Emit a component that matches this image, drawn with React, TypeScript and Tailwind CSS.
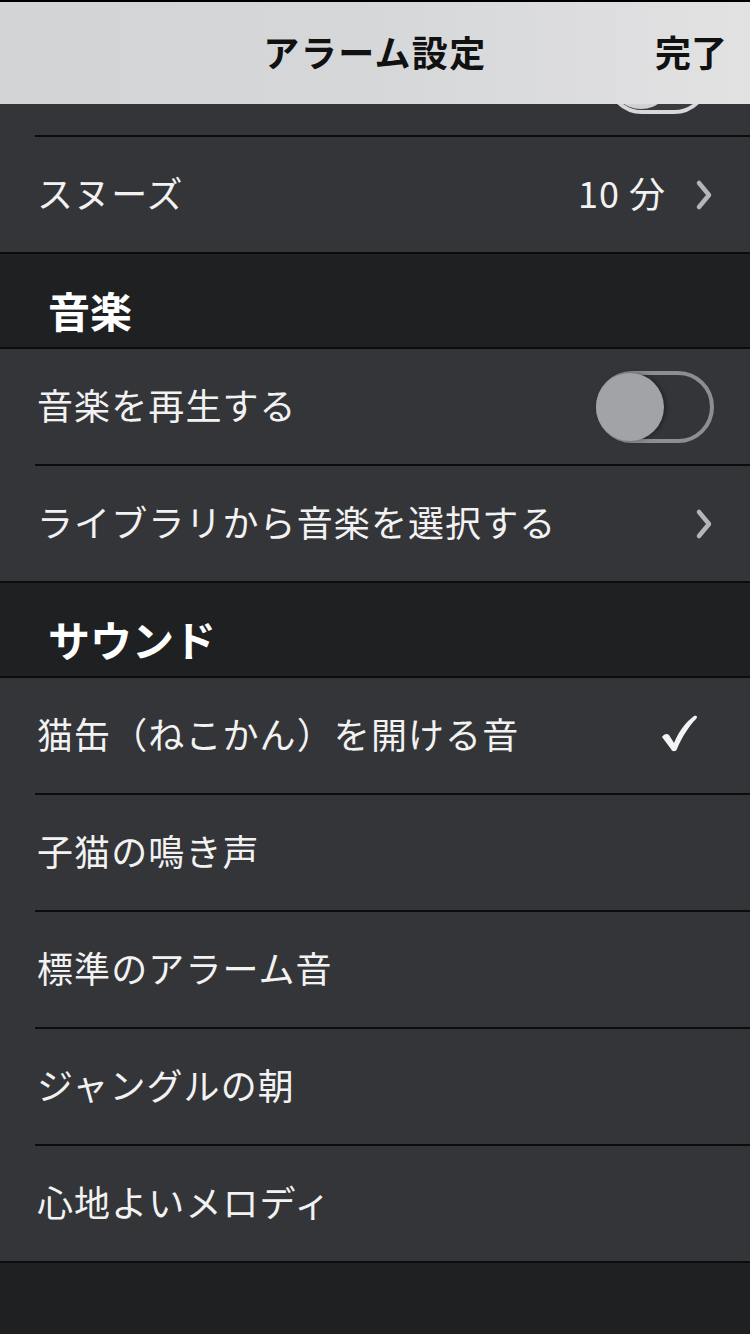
import React from "react";

const font = { fontFamily: '"Noto Sans CJK JP", "Noto Sans", sans-serif' };

function Chevron() {
  return (
    <svg width="20" height="32" viewBox="0 0 20 32" fill="none" stroke="#b4b5b8" strokeWidth="4.5" strokeLinecap="round" strokeLinejoin="round">
      <path d="M5 4L15 16L5 28" />
    </svg>
  );
}

function Check() {
  return (
    <svg width="38" height="38" viewBox="0 0 38 38">
      <path d="M2 22C4 19 7 18 9 20L14 28C19 16 26 7 34 1C37 0 38 2 36 4C29 11 22 22 17 34C16 37 12 37 11 34Z" fill="#f4f4f4" />
    </svg>
  );
}

function Switch() {
  return (
    <div className="w-[118px] h-[72px] rounded-full border-[4px] border-[#8d8e91] bg-[#343538] flex items-center">
      <div className="w-[68px] h-[68px] -ml-[4px] rounded-full bg-[#a2a3a6] shadow-[2px_0_4px_rgba(0,0,0,0.35)]" />
    </div>
  );
}

function Sep({ inset }: { inset?: boolean }) {
  return (
    <div className={inset ? "h-[2px] bg-[#343538] pl-[35px]" : "h-[2px] bg-[#0c0c0d]"}>
      {inset && <div className="h-full bg-[#0c0c0d]" />}
    </div>
  );
}

function Row({ label, right }: { label: string; right?: React.ReactNode }) {
  return (
    <div className="h-[115px] bg-[#343538] flex items-center justify-between pl-[37px] pr-[36px]">
      <span className="text-[36px] text-[#f2f2f2] leading-none tracking-[1.1px] pb-[6px]">{label}</span>
      {right}
    </div>
  );
}

function Section({ title }: { title: string }) {
  return (
    <div className="h-[93px] bg-[#1f2022] flex items-end pl-[48px] pb-[16px]">
      <span className="text-[42px] font-bold text-white leading-none">{title}</span>
    </div>
  );
}

export default function App() {
  const sounds = ["子猫の鳴き声", "標準のアラーム音", "ジャングルの朝", "心地よいメロディ"];

  return (
    <div className="w-[750px] h-[1334px] bg-[#1f2022] overflow-hidden" style={font}>
      {/* nav bar */}
      <div className="h-[104px] border-t-2 border-black bg-gradient-to-r from-[#d3d4d6] via-[#d6d7d9] to-[#e2e2e3] flex items-center relative">
        <span className="flex-1 text-center text-[36px] font-bold text-[#111] pb-[4px] leading-none tracking-[1.4px]">アラーム設定</span>
        <span className="absolute right-[23px] text-[36px] font-bold text-[#111] pb-[4px] leading-none">完了</span>
      </div>

      {/* row scrolled under the bar */}
      <div className="h-[31px] bg-[#343538] overflow-hidden flex justify-end pr-[40px]">
        <div className="-mt-[62px] w-[104px] h-[72px] rounded-full border-[4px] border-[#d8d8da] bg-[#3a3b3e] flex items-center">
          <div className="w-[62px] h-[62px] rounded-full bg-gradient-to-b from-white to-[#cfcfd1]" />
        </div>
      </div>
      <Sep inset />

      <Row
        label="スヌーズ"
        right={
          <div className="flex items-center gap-[28px]">
            <span className="text-[36px] text-[#f2f2f2] leading-none tracking-[1px] pb-[6px]">10 分</span>
            <Chevron />
          </div>
        }
      />
      <Sep />

      <Section title="音楽" />
      <Sep />
      <Row label="音楽を再生する" right={<Switch />} />
      <Sep inset />
      <Row label="ライブラリから音楽を選択する" right={<Chevron />} />
      <Sep />

      <Section title="サウンド" />
      <Sep />
      <Row label="猫缶（ねこかん）を開ける音" right={<div className="mr-[16px] pb-[4px]"><Check /></div>} />
      {sounds.map((s) => (
        <React.Fragment key={s}>
          <Sep inset />
          <Row label={s} />
        </React.Fragment>
      ))}
      <Sep />
    </div>
  );
}
